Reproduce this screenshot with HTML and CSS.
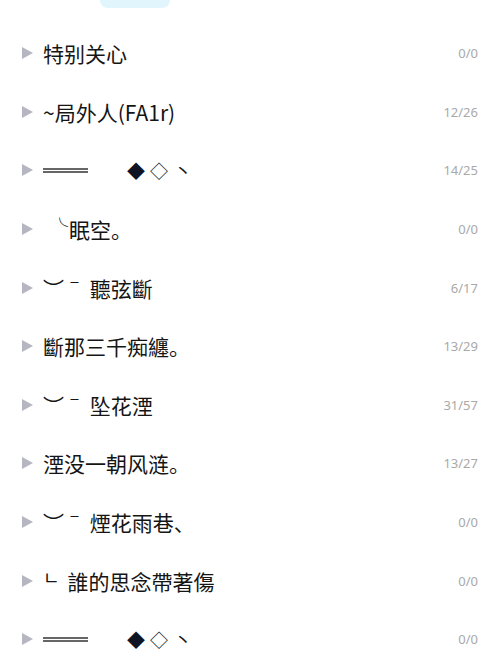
FILE: index.html
```html
<!DOCTYPE html>
<html lang="zh-CN">
<head>
    <meta charset="UTF-8">
    <meta name="viewport" content="width=device-width, initial-scale=1.0">
    <title>联系人分组</title>
    <link rel="stylesheet" href="styles.css">
</head>
<body>
    <div class="top-pill"></div>
    <ul class="group-list">
        <li class="group-row">
            <svg class="arrow" viewBox="0 0 11 12"><polygon points="0,0 11,6 0,12"/></svg>
            <span class="group-name">特别关心</span>
            <span class="group-count">0/0</span>
        </li>
        <li class="group-row">
            <svg class="arrow" viewBox="0 0 11 12"><polygon points="0,0 11,6 0,12"/></svg>
            <span class="group-name">~局外人(FA1r)</span>
            <span class="group-count">12/26</span>
        </li>
        <li class="group-row">
            <svg class="arrow" viewBox="0 0 11 12"><polygon points="0,0 11,6 0,12"/></svg>
            <span class="group-name"><span class="dbl"></span><span class="gems">◆</span><span class="gems">◇</span><span class="dot">丶</span></span>
            <span class="group-count">14/25</span>
        </li>
        <li class="group-row">
            <svg class="arrow" viewBox="0 0 11 12"><polygon points="0,0 11,6 0,12"/></svg>
            <span class="group-name"><span class="hook">╰</span>眠空。</span>
            <span class="group-count">0/0</span>
        </li>
        <li class="group-row">
            <svg class="arrow" viewBox="0 0 11 12"><polygon points="0,0 11,6 0,12"/></svg>
            <span class="group-name">︶ˉ 聽弦斷</span>
            <span class="group-count">6/17</span>
        </li>
        <li class="group-row">
            <svg class="arrow" viewBox="0 0 11 12"><polygon points="0,0 11,6 0,12"/></svg>
            <span class="group-name">斷那三千痴纏。</span>
            <span class="group-count">13/29</span>
        </li>
        <li class="group-row">
            <svg class="arrow" viewBox="0 0 11 12"><polygon points="0,0 11,6 0,12"/></svg>
            <span class="group-name">︶ˉ 坠花湮</span>
            <span class="group-count">31/57</span>
        </li>
        <li class="group-row">
            <svg class="arrow" viewBox="0 0 11 12"><polygon points="0,0 11,6 0,12"/></svg>
            <span class="group-name">湮没一朝风涟。</span>
            <span class="group-count">13/27</span>
        </li>
        <li class="group-row">
            <svg class="arrow" viewBox="0 0 11 12"><polygon points="0,0 11,6 0,12"/></svg>
            <span class="group-name">︶ˉ 煙花雨巷、</span>
            <span class="group-count">0/0</span>
        </li>
        <li class="group-row">
            <svg class="arrow" viewBox="0 0 11 12"><polygon points="0,0 11,6 0,12"/></svg>
            <span class="group-name"><span class="corner">ㄴ</span>誰的思念帶著傷</span>
            <span class="group-count">0/0</span>
        </li>
        <li class="group-row">
            <svg class="arrow" viewBox="0 0 11 12"><polygon points="0,0 11,6 0,12"/></svg>
            <span class="group-name"><span class="dbl"></span><span class="gems">◆</span><span class="gems">◇</span><span class="dot">丶</span></span>
            <span class="group-count">0/0</span>
        </li>
    </ul>
</body>
</html>
```

FILE: styles.css
```css
body {
    margin: 0;
    background-color: #fff;
    font-family: "Noto Sans CJK SC", "Noto Sans", sans-serif;
    overflow: hidden;
}

.top-pill {
    width: 70px;
    height: 8px;
    margin-left: 100px;
    background-color: #e1f6fc;
    border-radius: 0 0 22px 22px;
}

.group-list {
    list-style: none;
    margin: 0;
    padding: 16px 22px 0 22px;
}

.group-row {
    display: flex;
    align-items: center;
    height: 58.6px;
}

.arrow {
    width: 11px;
    height: 12px;
    fill: #b6b6c2;
    flex-shrink: 0;
}

.group-name {
    flex: 1;
    display: flex;
    align-items: center;
    margin-left: 10px;
    font-size: 21px;
    color: #151515;
    white-space: nowrap;
}

/* double rule drawn with borders */
.dbl {
    width: 45px;
    height: 1px;
    border-top: 2px solid #666;
    border-bottom: 2px solid #666;
    margin-right: 39px;
}

.gems {
    font-size: 18px;
    margin-right: 5px;
    color: #0f1424;
}

.dot {
    font-size: 18px;
    margin-left: 1px;
}

.hook {
    font-size: 17px;
    align-self: flex-start;
    margin: 0 1px 0 8px;
    line-height: 1;
    transform: translateY(3px);
}

.corner {
    font-size: 18px;
    transform: translateY(-4px);
    margin-right: 8px;
}

.group-count {
    font-family: "Noto Sans", sans-serif;
    font-size: 13px;
    color: #a9a9a9;
}
```
